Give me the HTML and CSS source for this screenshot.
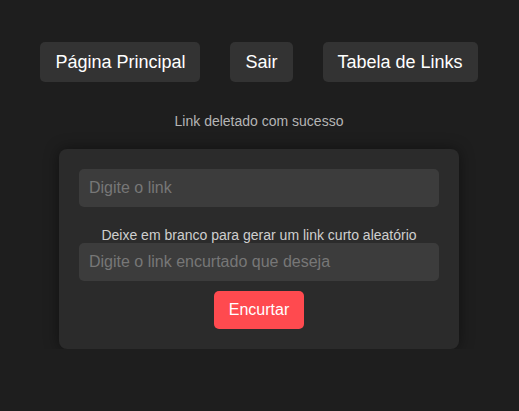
FILE: index.html
```html
<!DOCTYPE html>
<html lang="pt-BR">
<head>
<meta charset="utf-8">
<title>Encurtador</title>
<link rel="stylesheet" href="styles.css">
</head>
<body>
<nav class="nav">
  <a class="nav-btn" href="#">Página Principal</a>
  <a class="nav-btn" href="#">Sair</a>
  <a class="nav-btn" href="#">Tabela de Links</a>
</nav>
<p class="message">Link deletado com sucesso</p>
<form class="card">
  <input class="field" type="text" placeholder="Digite o link">
  <label class="hint">Deixe em branco para gerar um link curto aleatório</label>
  <input class="field" type="text" placeholder="Digite o link encurtado que deseja">
  <button class="submit" type="button">Encurtar</button>
</form>
</body>
</html>
```
FILE: styles.css
```css
html, body {
  margin: 0;
  padding: 0;
  background: #1e1e1e;
  font-family: "Liberation Sans", Arial, sans-serif;
  color: #ddd;
}
body {
  display: flex;
  flex-direction: column;
  align-items: center;
  padding-top: 42px;
  padding-right: 1px;
}
.nav {
  display: flex;
  gap: 30px;
}
.nav-btn {
  display: flex;
  align-items: center;
  height: 40px;
  padding: 0 15px;
  background: #333333;
  color: #fff;
  text-decoration: none;
  font-size: 18px;
  border-radius: 5px;
}
.message {
  margin: 31px 0 0;
  font-size: 14px;
  line-height: 16px;
  color: #b5b5b5;
}
.card {
  margin-top: 20px;
  width: 360px;
  padding: 20px;
  background: #2b2b2b;
  border-radius: 8px;
  box-shadow: 0 0 15px rgba(0, 0, 0, 0.45);
  display: flex;
  flex-direction: column;
  align-items: center;
}
.field {
  box-sizing: border-box;
  width: 360px;
  height: 38px;
  padding: 0 10px;
  border: none;
  border-radius: 5px;
  background: #3c3c3c;
  color: #eee;
  font-family: inherit;
  font-size: 16px;
  outline: none;
}
.field::placeholder {
  color: #777;
}
.hint {
  margin-top: 20px;
  font-size: 14px;
  line-height: 16px;
  color: #cfcfcf;
}
.submit {
  margin-top: 10px;
  width: 90px;
  height: 38px;
  border: none;
  border-radius: 5px;
  background: #ff4a4f;
  color: #fff;
  font-family: inherit;
  font-size: 16px;
}
```
